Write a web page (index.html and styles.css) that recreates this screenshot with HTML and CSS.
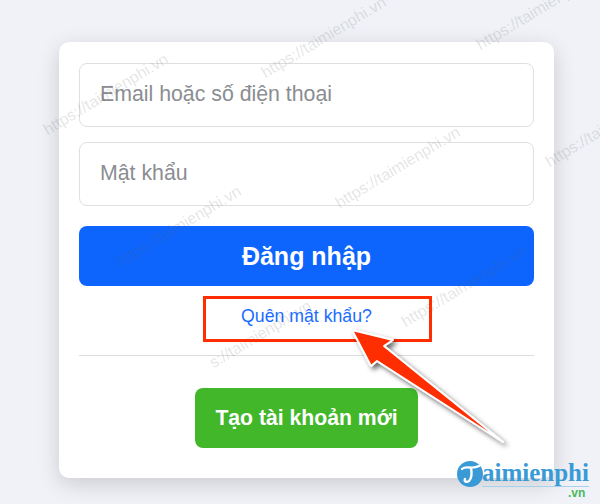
FILE: index.html
```html
<!DOCTYPE html>
<html lang="vi">
<head>
    <meta charset="UTF-8">
    <title>Đăng nhập</title>
    <link rel="stylesheet" href="styles.css">
</head>
<body>
    <div class="card">
        <div class="field">Email hoặc số điện thoại</div>
        <div class="field">Mật khẩu</div>
        <button class="btn-login">Đăng nhập</button>
        <div class="forgot"><a href="#">Quên mật khẩu?</a></div>
        <div class="divider"></div>
        <div class="create-row"><button class="btn-create">Tạo tài khoản mới</button></div>
    </div>

    <!-- watermark -->
    <span class="mark m1">https://taimienphi.vn</span>
    <span class="mark m2">https://taimienphi.vn</span>
    <span class="mark m3">https://taimienphi.vn</span>
    <span class="mark m4">https://taimienphi.vn</span>
    <span class="mark m5">https://taimienphi.vn</span>
    <span class="mark m6">https://taimienphi.vn</span>
    <span class="mark m7">https://taimienphi.vn</span>
    <span class="mark m8">s://taimienphi.vn</span>

    <!-- annotation -->
    <div class="highlight"></div>
    <svg class="arrow" width="170" height="130" viewBox="0 0 170 130">
        <defs>
            <filter id="arrowShadow" x="-20%" y="-20%" width="140%" height="140%">
                <feDropShadow dx="3" dy="3" stdDeviation="2.5" flood-color="#000" flood-opacity="0.6"/>
            </filter>
        </defs>
        <path d="M2 3 L43 13 L34 19 L153 115 L27 34 L21 39 Z" fill="#ff2d00" stroke="#fff" stroke-width="2" stroke-linejoin="round" filter="url(#arrowShadow)"/>
    </svg>

    <div class="logo">
        <svg class="logo-icon" width="26" height="26" viewBox="0 0 26 26">
            <circle cx="13" cy="13" r="13" fill="#3a9ad6"/>
            <path d="M5 8 C9 4 15 9 22 5 M14 7 C15 12 15 17 12 20 C9 22 7 20 8 18" fill="none" stroke="#fff" stroke-width="2.4" stroke-linecap="round"/>
        </svg>
        <span class="logo-name">aimienphi</span>
        <span class="logo-vn">.vn</span>
    </div>
</body>
</html>
```

FILE: styles.css
```css
body { margin: 0; height: 504px; overflow: hidden; position: relative; background: #f0f2f7; font-family: "Liberation Sans", Arial, sans-serif; }

.card { box-sizing: border-box; width: 495px; height: 436px; margin: 42px 0 0 59px; padding: 21px 20px 0; background: white; border-radius: 10px; box-shadow: 0 6px 22px rgba(0, 0, 0, 0.16); }
.field { box-sizing: border-box; height: 64px; margin-bottom: 15px; padding-left: 20px; padding-bottom: 2px; display: flex; align-items: center; border: 1px solid #dddfe2; border-radius: 8px; font-size: 21.3px; color: #8a8d91; }
.btn-login { display: block; width: 100%; height: 60px; margin-top: 20px; border: none; border-radius: 8px; background: #0d65fd; color: white; font-family: inherit; font-size: 25px; font-weight: bold; }
.forgot { margin-top: 20px; text-align: center; font-size: 17.7px; line-height: 21px; }
.forgot a { color: #1a6cff; text-decoration: none; }
.divider { margin-top: 28px; border-top: 1px solid #dadde1; }
.create-row { display: flex; justify-content: center; margin-top: 32px; }
.btn-create { width: 223px; height: 60px; border: none; border-radius: 8px; background: #42b72a; color: white; font-family: inherit; font-size: 21.2px; font-weight: bold; }

.mark { position: absolute; font-size: 16px; line-height: 16px; color: rgba(90, 90, 90, 0.17); transform: rotate(-31deg); transform-origin: left bottom; white-space: nowrap; }
.m1 { left: 49px; top: 122px; }
.m2 { left: 267px; top: 65px; }
.m3 { left: 482px; top: 37px; }
.m4 { left: 341px; top: 195px; }
.m5 { left: 551px; top: 154px; }
.m6 { left: 122px; top: 254px; }
.m7 { left: 407px; top: 314px; }
.m8 { left: 215px; top: 355px; }

.highlight { position: absolute; left: 203px; top: 296px; width: 229px; height: 46px; box-sizing: border-box; border: 3px solid #ff2d00; }
.arrow { position: absolute; left: 350px; top: 327px; }

.logo { position: absolute; left: 457px; top: 461px; width: 133px; height: 36px; }
.logo-icon { position: absolute; left: 0; top: 0; }
.logo-name { position: absolute; left: 25px; top: 0; padding-bottom: 1px; border-bottom: 1px solid #a8d2ec; font-family: "Liberation Serif", serif; font-size: 25px; line-height: 24px; font-weight: bold; color: #3a9ad6; }
.logo-vn { position: absolute; left: 111px; top: 27px; font-size: 12px; line-height: 10px; font-weight: bold; color: #4cb860; }
```
